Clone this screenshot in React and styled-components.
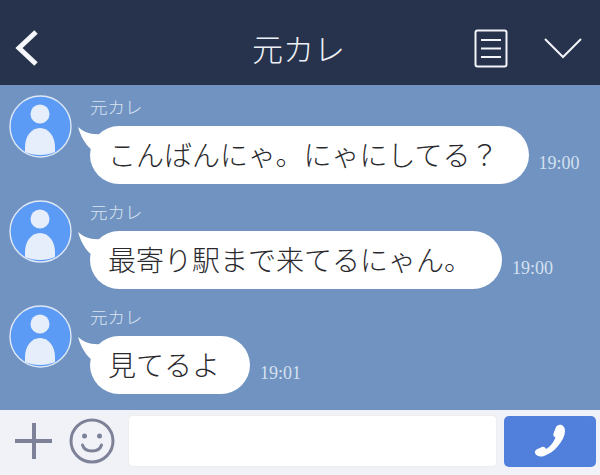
import React from "react";
import styled, { createGlobalStyle } from "styled-components";

const Global = createGlobalStyle`
  html, body { margin: 0; padding: 0; }
  body { width: 600px; height: 475px; overflow: hidden; font-family: "Noto Sans CJK JP", "Noto Sans", sans-serif; }
`;
const Screen = styled.div`
  width: 600px; height: 475px; display: flex; flex-direction: column; background: #7093c1;
`;
const Header = styled.header`
  height: 85px; flex: none; background: #27324d; display: grid; grid-template-columns: 1fr auto 1fr; align-items: center;
  padding: 11px 18px 0 15px; box-sizing: border-box; color: #eef1f6;
`;
const Title = styled.h1`
  margin: 0 0 2px; text-align: center; font-size: 31px; font-weight: 300; line-height: 1;
`;
const HeaderIcon = styled.svg`
  display: block; flex: none; margin-left: ${p => p.$gap || 0}px;
`;
const HeaderActions = styled.div`
  display: flex; align-items: center; justify-content: flex-end;
`;
const Chat = styled.main`
  flex: 1; padding-top: 10px; display: flex; flex-direction: column; gap: 43px; overflow: hidden;
`;
const Row = styled.div`
  display: flex; padding-left: 9px; height: 62px;
`;
const Avatar = styled.svg`
  flex: none; width: 63px; height: 63px; display: block;
`;
const Body = styled.div`
  margin-left: 18px; display: flex; flex-direction: column; height: 99px; flex: none;
`;
const Name = styled.div`
  font-size: 17.5px; font-weight: 300; color: #d9e3f1; height: 31px; line-height: 24px;
`;
const BubbleLine = styled.div`
  display: flex; align-items: flex-end; gap: 10px;
`;
const Bubble = styled.div`
  position: relative; background: #fff; height: 58px; border-radius: 29px; box-sizing: border-box;
  padding: 0 30px 2px 18px; display: flex; align-items: center; font-size: 28px;
  font-weight: 300; color: #2a2a2e; white-space: nowrap; line-height: 1;
`;
const Tail = styled.svg`
  position: absolute; left: -12px; top: 1px; width: 32px; height: 26px;
`;
const Time = styled.span`
  font-family: "Liberation Serif", serif; font-size: 18px; color: #d4e0f0; line-height: 1; padding-bottom: 12px;
`;
const Footer = styled.footer`
  height: 65px; flex: none; background: #f0f2f7; display: flex; align-items: center;
  padding: 0 4px 3px 14px; box-sizing: border-box;
`;
const Input = styled.div`
  width: 367px; height: 50px; margin-left: 14px; background: #fff; border-radius: 4px; box-shadow: 0 0 2px #e6e2df;
`;
const Send = styled.button`
  width: 92px; height: 51px; margin-left: 8px; border: 0; padding: 0; background: #5080dc; border-radius: 5px;
  display: flex; align-items: center; justify-content: center;
`;
const Smile = styled.svg`
  display: block; flex: none; margin-left: 15px;
`;

const AvatarIcon = () => (
  <Avatar viewBox="0 0 63 63">
    <circle cx="31.5" cy="31.5" r="30.5" fill="#5b9bf5" stroke="#dfe8f6" strokeWidth="1.4" />
    <circle cx="31" cy="19" r="9.5" fill="#e6eefb" />
    <path d="M16 57 L16 52 C16 42 22 33 31 33 C40 33 46 42 46 52 L46 57 C37 61 25 61 16 57 Z" fill="#e6eefb" />
  </Avatar>
);

const Message = ({ text, time }) => (
  <Row>
    <AvatarIcon />
    <Body>
      <Name>元カレ</Name>
      <BubbleLine>
        <Bubble>
          <Tail viewBox="0 0 32 26">
            <path d="M0 0 C6 5 12 8 24 7 L20 26 C12 24 4 14 0 0 Z" fill="#fff" />
          </Tail>
          {text}
        </Bubble>
        <Time>{time}</Time>
      </BubbleLine>
    </Body>
  </Row>
);

export default function App() {
  return (
    <Screen>
      <Global />
      <Header>
        <HeaderIcon width="24" height="38" viewBox="0 0 24 38" fill="none">
          <path d="M21 3 L4 19 L21 35" stroke="#f5f7fa" strokeWidth="5" />
        </HeaderIcon>
        <Title>元カレ</Title>
        <HeaderActions>
          <HeaderIcon width="34" height="39" viewBox="0 0 34 39" fill="none" stroke="#f2f4f8" strokeWidth="2">
            <rect x="1.5" y="1.5" width="31" height="36" rx="2" />
            <path d="M7 11 H27 M7 19.5 H27 M7 28 H27" />
          </HeaderIcon>
          <HeaderIcon $gap={36} width="38" height="22" viewBox="0 0 38 22" fill="none" stroke="#f2f4f8" strokeWidth="2">
            <path d="M1 2 L19 20 L37 2" />
          </HeaderIcon>
        </HeaderActions>
      </Header>
      <Chat>
        <Message text={"こんばんにゃ。にゃにしてる\uFF1F"} time="19:00" />
        <Message text="最寄り駅まで来てるにゃん。" time="19:00" />
        <Message text="見てるよ" time="19:01" />
      </Chat>
      <Footer>
        <svg width="40" height="40" viewBox="0 0 40 40" fill="none" stroke="#7e8299" strokeWidth="4">
          <path d="M1 20 H38 M20 2 V38" />
        </svg>
        <Smile width="46" height="46" viewBox="0 0 46 46" fill="none" stroke="#7e8299">
          <circle cx="23" cy="23" r="21" strokeWidth="3" />
          <circle cx="15.5" cy="18" r="2.5" fill="#7e8299" stroke="none" />
          <circle cx="30.5" cy="18" r="2.5" fill="#7e8299" stroke="none" />
          <path d="M13.5 27 C16 35 30 35 32.5 27" strokeWidth="3" strokeLinecap="round" />
        </Smile>
        <Input />
        <Send>
          <svg width="34" height="34" viewBox="0 0 34 34" fill="#fff">
            <path d="M26 1 C29 0 32 3 32 7 C32 12 29 17 25 22 C21 27 16 30 11 32 C7 33.5 3 32 2 29 C1.5 27.5 2.5 26 4.5 25 L9 23 C10.5 22.5 12 23 13 25 C16.5 23.5 20.5 18.5 22.5 13.5 C20.5 12.5 20 11 20.5 9.5 L23 3 C23.5 2 24.5 1.2 26 1 Z" />
          </svg>
        </Send>
      </Footer>
    </Screen>
  );
}
